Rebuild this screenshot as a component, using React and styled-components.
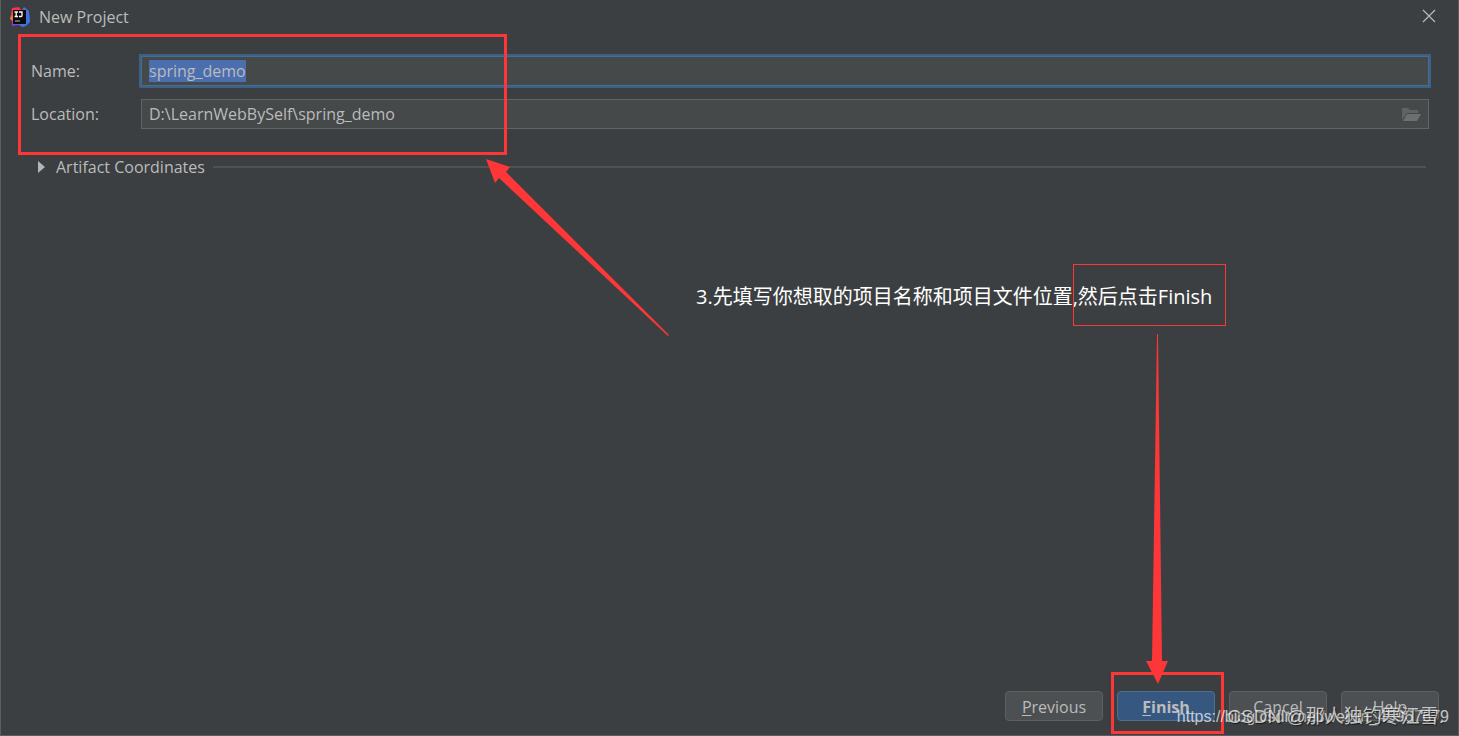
import React from "react";
import styled, { createGlobalStyle } from "styled-components";

const GlobalStyle = createGlobalStyle`
  *, *::before, *::after {
    box-sizing: border-box;
  }
  body {
    margin: 0;
    background: #3c3f41;
    color: #bbbbbb;
    font-family: "Open Sans", "Noto Sans CJK SC", sans-serif;
    font-size: 16px;
  }
  button, input {
    font: inherit;
    color: inherit;
  }
`;

const App = () => {
  return (
    <Dialog>
      <GlobalStyle />
      <TitleBar>
        <Logo />
        <Title>New Project</Title>
        <CloseButton aria-label="Close">
          <svg width="14" height="14" viewBox="0 0 14 14">
            <path d="M1 1L13 13M13 1L1 13" stroke="#b9bbbc" strokeWidth="1.2" />
          </svg>
        </CloseButton>
      </TitleBar>

      <Form>
        <Row>
          <Label htmlFor="name">Name:</Label>
          <Field $focused>
            <Input
              id="name"
              defaultValue="spring_demo"
              autoFocus
              onFocus={(e) => e.target.select()}
            />
          </Field>
        </Row>
        <Row>
          <Label htmlFor="location">Location:</Label>
          <Field>
            <Input
              id="location"
              defaultValue="D:\LearnWebBySelf\spring_demo"
            />
            <BrowseButton type="button" aria-label="Browse">
              <svg width="19" height="15" viewBox="0 0 19 15">
                <path d="M0 13V1h6l2 2h8v3H5z" fill="#5d6467" />
                <path d="M5 7h14l-4 7H1z" fill="#6b7173" />
              </svg>
            </BrowseButton>
          </Field>
        </Row>
        <Section>
          <SectionButton type="button" aria-expanded="false">
            <svg width="7" height="12" viewBox="0 0 7 12">
              <path d="M0 0L7 6L0 12z" fill="#b4b5b6" />
            </svg>
            Artifact Coordinates
          </SectionButton>
          <Divider />
        </Section>
      </Form>

      <Buttons>
        <Button>
          <u>P</u>revious
        </Button>
        <Button $primary>
          <u>F</u>inish
        </Button>
        <Button>Cancel</Button>
        <Button>Help</Button>
      </Buttons>

      <FieldsFrame />
      <FinishFrame />
      <Note>3.先填写你想取的项目名称和项目文件位置,然后点击Finish</Note>
      <NoteFrame />
      <Arrows width="1459" height="736" viewBox="0 0 1459 736">
        <path d="M486 159L510 167L506 172L669 335L668 336L499 178L495 183z" />
        <path d="M1157 334L1158 334L1162 661L1168 661L1158 684L1146 661L1152 661z" />
      </Arrows>
      <UrlMark>https://blog.csdn.net/weixin_45967679</UrlMark>
      <AuthorMark>CSDN @那人独钓寒江雪.</AuthorMark>
    </Dialog>
  );
};

const Logo = () => (
  <svg width="20" height="20" viewBox="0 0 20 20">
    <defs>
      <linearGradient id="left" x1="0" y1="0" x2="0" y2="1">
        <stop offset="0" stopColor="#fe2857" />
        <stop offset="0.4" stopColor="#f04a3c" />
        <stop offset="0.6" stopColor="#f98a25" />
        <stop offset="0.75" stopColor="#a63cb8" />
        <stop offset="1" stopColor="#7b3ff0" />
      </linearGradient>
      <linearGradient id="right" x1="0" y1="0" x2="1" y2="1">
        <stop offset="0" stopColor="#8a4fc0" />
        <stop offset="0.5" stopColor="#4a6fe0" />
        <stop offset="1" stopColor="#2b78e8" />
      </linearGradient>
    </defs>
    <path d="M2 1L9 0L12 4V16L8 18L2 19V14L0 12L1 8z" fill="url(#left)" />
    <path d="M12 3L14 0L19 4L20 15L16 19L12 20L8 17z" fill="url(#right)" />
    <rect x="3" y="3" width="13" height="14" fill="#0b0b0d" />
    <path
      d="M4.5 5H8M6.2 5V9.5M4.5 9.5H8M9 5H12V8.5Q12 9.5 11 9.5H9"
      stroke="#ffffff"
      strokeWidth="1.3"
      fill="none"
    />
    <path d="M5 14H10" stroke="#8a8a8a" strokeWidth="1.4" />
  </svg>
);

const Dialog = styled.main`
  position: relative;
  display: flex;
  flex-direction: column;
  min-height: 100vh;
  overflow: hidden;
  border: 1px solid #5b5d5e;
  border-top: none;
`;

const TitleBar = styled.header`
  display: flex;
  align-items: center;
  height: 34px;
  padding: 0 20px 0 9px;
`;

const Title = styled.h1`
  flex: 1;
  margin: 0 0 0 9px;
  font-size: 16px;
  font-weight: 400;
`;

const CloseButton = styled.button`
  display: flex;
  padding: 2px;
  margin-bottom: 2px;
  border: none;
  background: none;
`;

const Form = styled.form`
  flex: 1;
  padding: 18px 29px 0 30px;
`;

const Row = styled.div`
  display: flex;
  align-items: center;
  height: 38px;
  margin-bottom: 5px;
`;

const Label = styled.label`
  width: 110px;
`;

const Field = styled.div`
  flex: 1;
  display: flex;
  align-items: center;
  height: 30px;
  padding: 0 7px;
  background: #45494a;
  border: 1px solid ${({ $focused }) => ($focused ? "#466d94" : "#646464")};
  box-shadow: ${({ $focused }) => ($focused ? "0 0 0 2px #3d6185" : "none")};
`;

const Input = styled.input`
  flex: 1;
  min-width: 0;
  height: 22px;
  padding: 0;
  border: none;
  outline: none;
  background: none;
  &::selection {
    background: #4b6eaf;
    color: #bbbbbb;
  }
`;

const BrowseButton = styled.button`
  display: flex;
  padding: 0;
  border: none;
  background: none;
`;

const Section = styled.div`
  display: flex;
  align-items: center;
  height: 24px;
  margin: 22px 3px 0 7px;
`;

const SectionButton = styled.button`
  display: flex;
  align-items: center;
  gap: 11px;
  padding: 0;
  border: none;
  background: none;
`;

const Divider = styled.hr`
  flex: 1;
  height: 2px;
  margin: 0 0 0 8px;
  border: none;
  background: #515151;
`;

const Buttons = styled.footer`
  display: flex;
  justify-content: flex-end;
  gap: 14px;
  padding: 0 19px 14px;
`;

const Button = styled.button`
  width: 98px;
  height: 30px;
  padding: 2px 0 0;
  border: 1px solid ${({ $primary }) => ($primary ? "#4c708c" : "#5e6060")};
  border-radius: 4px;
  background: ${({ $primary }) => ($primary ? "#365880" : "#4c5052")};
  font-weight: ${({ $primary }) => ($primary ? 700 : 400)};
  u {
    text-underline-offset: 2px;
  }
`;

const Frame = styled.div`
  position: absolute;
  border: 3px solid #fd3737;
  pointer-events: none;
`;

const FieldsFrame = styled(Frame)`
  top: 34px;
  left: 17px;
  width: 489px;
  height: 121px;
`;

const FinishFrame = styled(Frame)`
  right: 234px;
  bottom: 1px;
  width: 113px;
  height: 62px;
`;

const NoteFrame = styled(Frame)`
  top: 264px;
  left: 1072px;
  width: 153px;
  height: 62px;
  border-width: 1px;
`;

const Note = styled.p`
  position: absolute;
  top: 283px;
  left: 695px;
  margin: 0;
  color: #ffffff;
  font-size: 20px;
  line-height: 28px;
  white-space: nowrap;
`;

const Arrows = styled.svg`
  position: absolute;
  top: 0;
  left: -1px;
  fill: #fd3737;
  pointer-events: none;
`;

const Mark = styled.span`
  position: absolute;
  color: rgba(255, 255, 255, 0.7);
  line-height: 24px;
  white-space: nowrap;
  pointer-events: none;
`;

const UrlMark = styled(Mark)`
  right: 9px;
  bottom: 6px;
  font-family: "Liberation Sans", sans-serif;
  font-size: 16px;
`;

const AuthorMark = styled(Mark)`
  right: 14px;
  bottom: 6px;
  font-family: "Liberation Sans", "Noto Sans CJK SC", sans-serif;
  font-size: 19px;
  text-shadow: 1px 1px 1px rgba(0, 0, 0, 0.6);
`;

export default App;
